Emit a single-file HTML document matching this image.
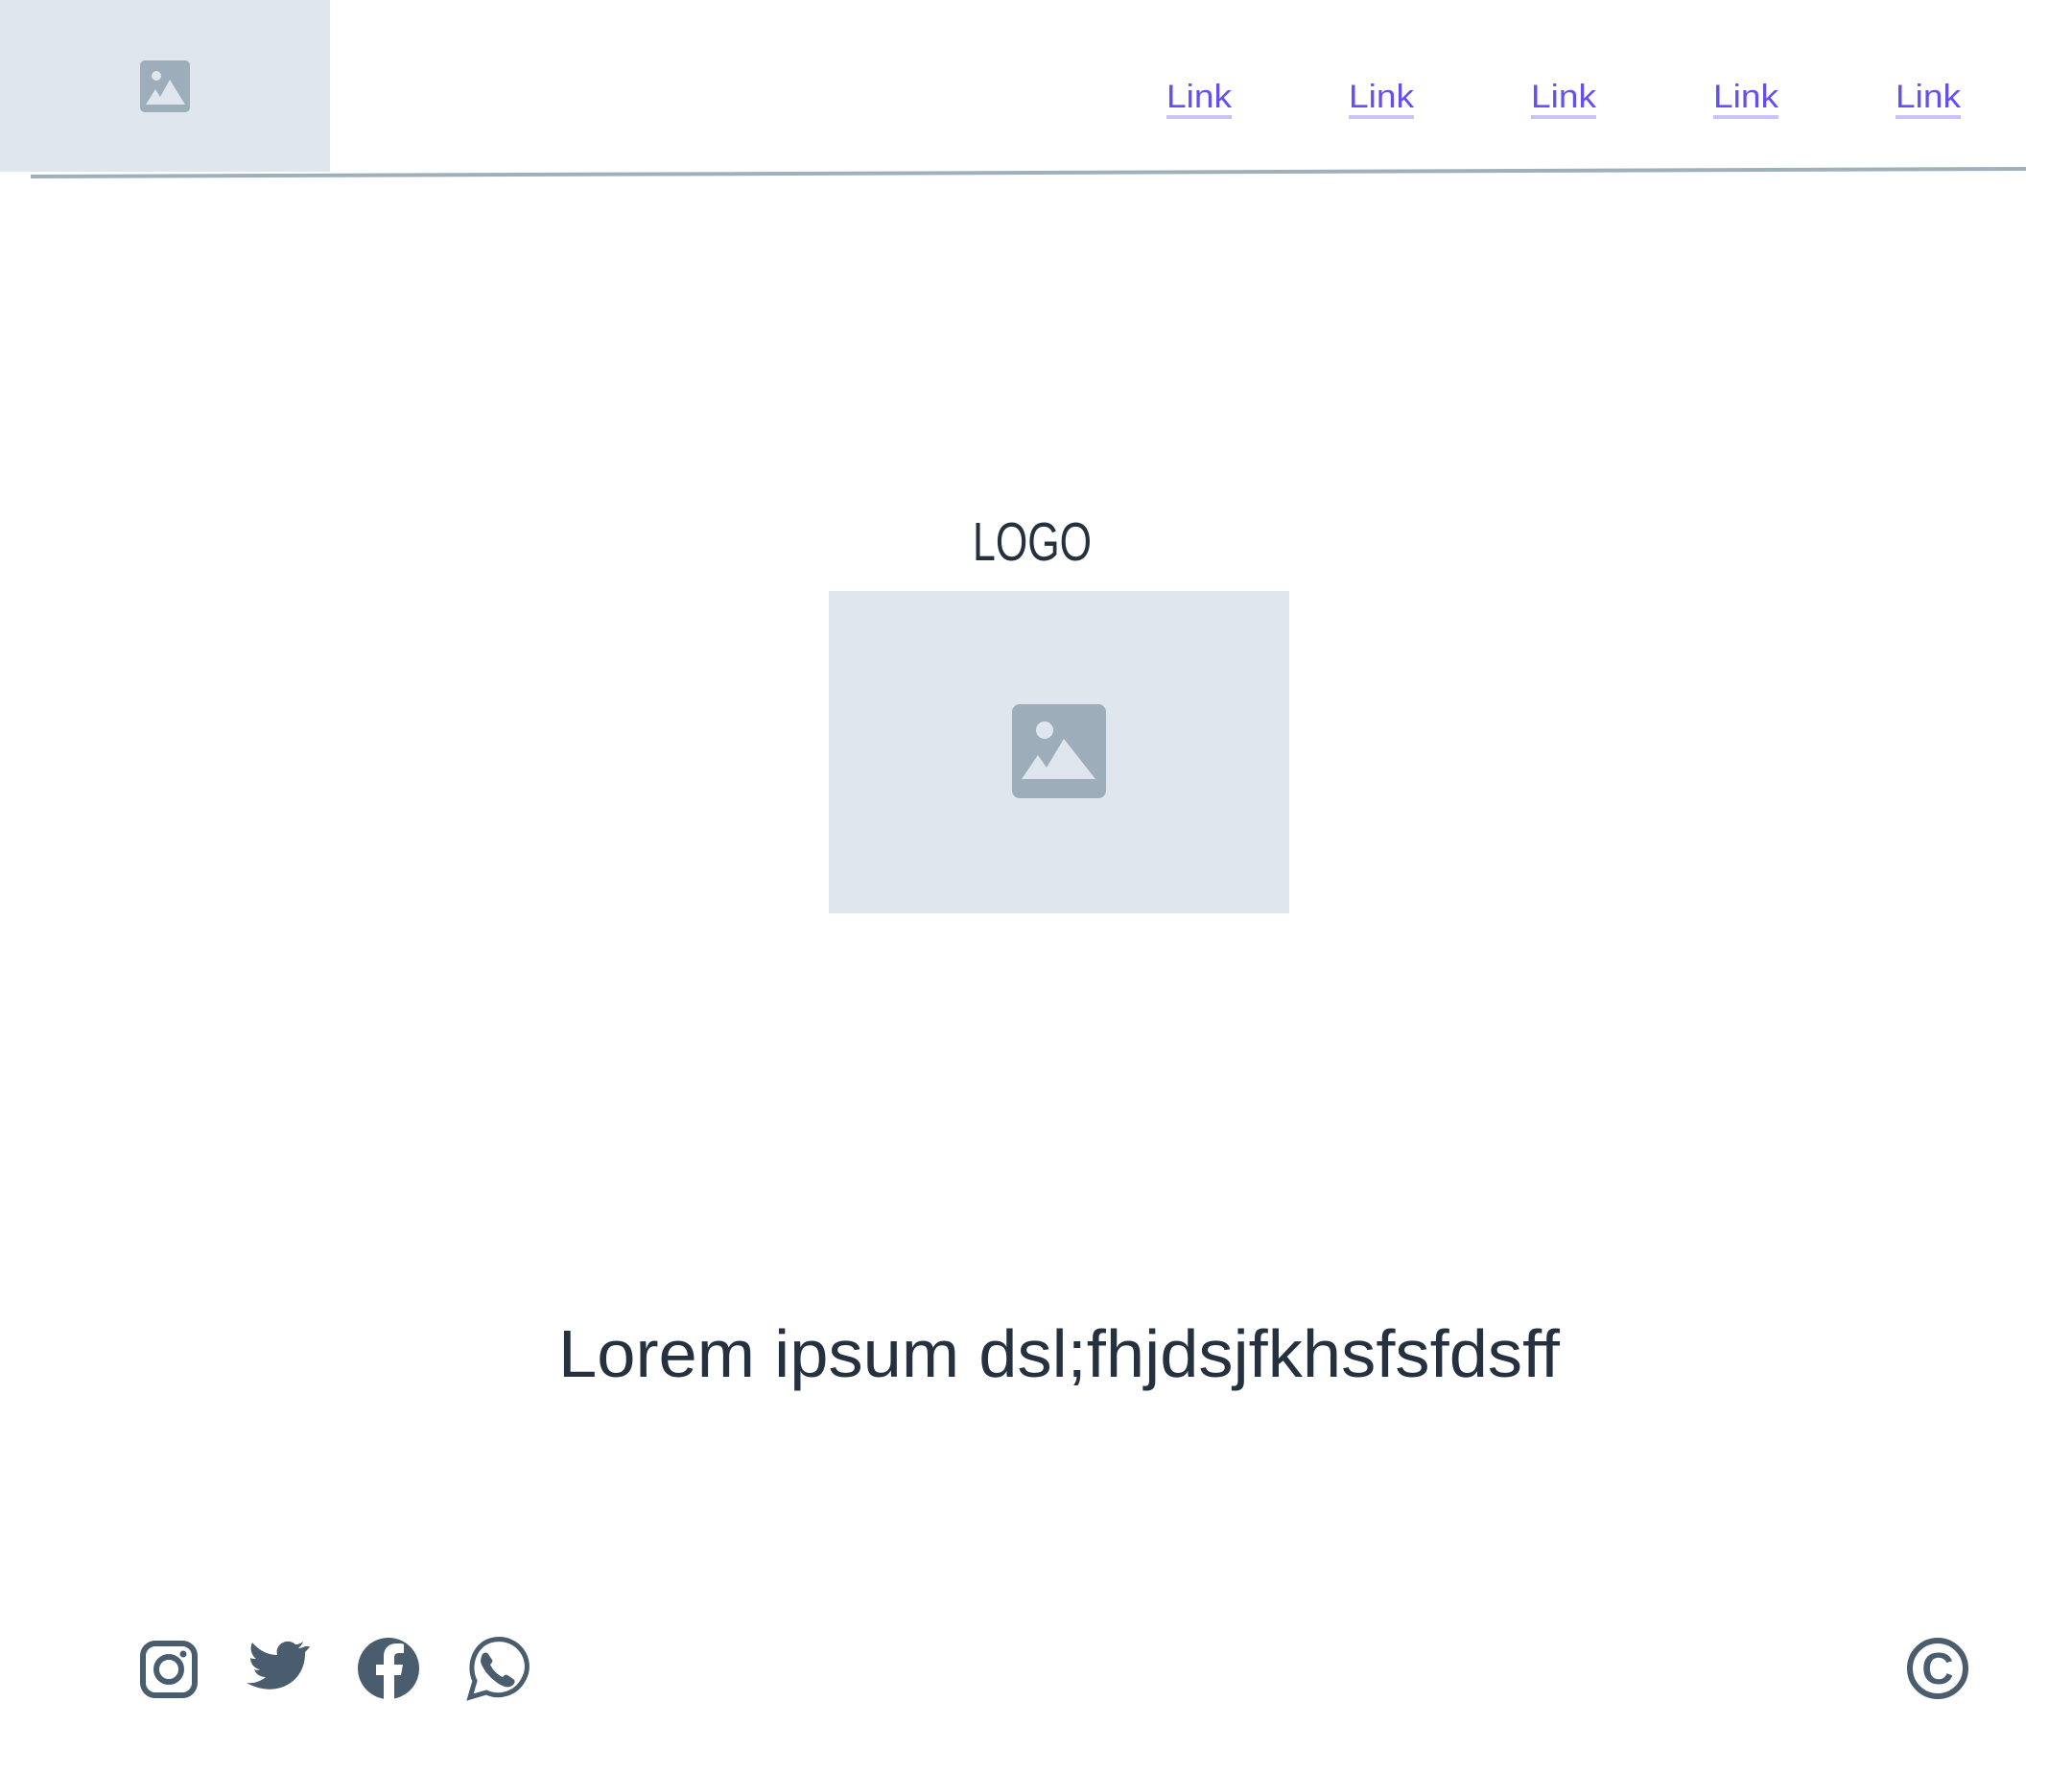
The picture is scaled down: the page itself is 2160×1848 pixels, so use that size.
<!DOCTYPE html>
<html><head><meta charset="utf-8"><style>
html,body{margin:0;padding:0;background:#fff;width:2160px;height:1848px;overflow:hidden}
</style></head><body>
<svg width="2160" height="1848" viewBox="0 0 2160 1848" xmlns="http://www.w3.org/2000/svg" style="position:absolute;left:0;top:0">
<rect x="0" y="0" width="344" height="179" fill="#dfe6ee"/>
<g transform="translate(146,63)">
<rect x="0" y="0" width="52" height="54" rx="5" fill="#9eadba"/>
<circle cx="17" cy="16" r="5" fill="#dfe6ee"/>
<path d="M6 46 L16 30 L21 38 L31 20 L47 46 Z" fill="#dfe6ee"/>
</g>
<line x1="32" y1="184" x2="2112" y2="176" stroke="#9fb0bd" stroke-width="4"/>
<g font-family="Liberation Sans, sans-serif" font-size="34" fill="#6450f0">
<text x="1216" y="112" textLength="68" lengthAdjust="spacingAndGlyphs">Link</text>
<text x="1406" y="112" textLength="68" lengthAdjust="spacingAndGlyphs">Link</text>
<text x="1596" y="112" textLength="68" lengthAdjust="spacingAndGlyphs">Link</text>
<text x="1786" y="112" textLength="68" lengthAdjust="spacingAndGlyphs">Link</text>
<text x="1976" y="112" textLength="68" lengthAdjust="spacingAndGlyphs">Link</text>
</g>
<g fill="#c8c4f8">
<rect x="1216" y="120" width="68" height="4"/><rect x="1406" y="120" width="68" height="4"/><rect x="1596" y="120" width="68" height="4"/><rect x="1786" y="120" width="68" height="4"/><rect x="1976" y="120" width="68" height="4"/>
</g>
<text x="1014" y="584" font-family="Liberation Sans, sans-serif" font-size="57" fill="#25313f" textLength="124" lengthAdjust="spacingAndGlyphs">LOGO</text>
<rect x="864" y="616" width="480" height="336" fill="#dfe6ee"/>
<g transform="translate(1055,734)">
<rect x="0" y="0" width="98" height="98" rx="8" fill="#9eadba"/>
<circle cx="34" cy="27" r="9" fill="#dfe6ee"/>
<path d="M10 78 L27 53 L36 66 L54 36 L87 78 Z" fill="#dfe6ee"/>
</g>
<text x="582" y="1435" font-family="Liberation Sans, sans-serif" font-size="70" fill="#25313f" textLength="1044" lengthAdjust="spacingAndGlyphs">Lorem ipsum dsl;fhjdsjfkhsfsfdsff</text>
<g fill="#4a5d6e" stroke="#4a5d6e">
<rect x="149" y="1713" width="54" height="54" rx="13" fill="none" stroke-width="6"/>
<circle cx="176" cy="1740" r="13" fill="none" stroke-width="6"/>
<circle cx="191" cy="1724" r="3.5" stroke="none"/>
<path stroke="none" transform="translate(-4,0)" d="M322 1716 c-2 1 -5 2 -7 2 c2 -2 4 -4 5 -7 c-3 2 -5 3 -8 3 c-6 -6 -17 -3 -19 5 c-1 2 0 4 0 6 c-11 0 -20 -6 -26 -13 c-3 6 -1 13 4 17 c-2 0 -4 0 -6 -1 c0 6 4 11 10 12 c-2 1 -4 1 -6 0 c2 5 6 8 12 8 c-6 5 -13 7 -20 6 c30 17 62 0 61 -32 c2 -2 4 -4 5 -6z"/>
<circle cx="405" cy="1739" r="32" stroke="none"/>
<path stroke="none" fill="#fff" d="M400 1772 L400 1746 L392 1746 L392 1735 L400 1735 L400 1727 c0 -10 6 -14 14 -14 c3 0 6 0 7 1 L421 1723 L416 1723 c-4 0 -5 2 -5 5 L411 1735 L420 1735 L418 1746 L411 1746 L411 1772 Z"/>
<g transform="translate(-5,0)">
<path fill="none" stroke-width="5" d="M495 1769 L500 1752 C492 1736 500 1712 520 1709 C545 1705 562 1730 551 1750 C543 1766 525 1770 512 1764 Z"/>
<path stroke="none" d="M508 1724 c2 -2 5 -2 6 0 l4 6 c1 2 0 3 -2 5 c3 6 7 10 13 13 c2 -2 3 -3 5 -2 l6 4 c2 1 2 4 0 6 c-4 4 -10 3 -18 -3 c-8 -6 -14 -14 -16 -21 c0 -3 1 -6 2 -8z"/>
</g>
<circle cx="2020" cy="1739" r="29" fill="none" stroke-width="6"/>
<text x="2020" y="1755" text-anchor="middle" font-family="Liberation Sans, sans-serif" font-weight="bold" font-size="46" stroke="none">C</text>
</g>
</svg>
</body></html>
